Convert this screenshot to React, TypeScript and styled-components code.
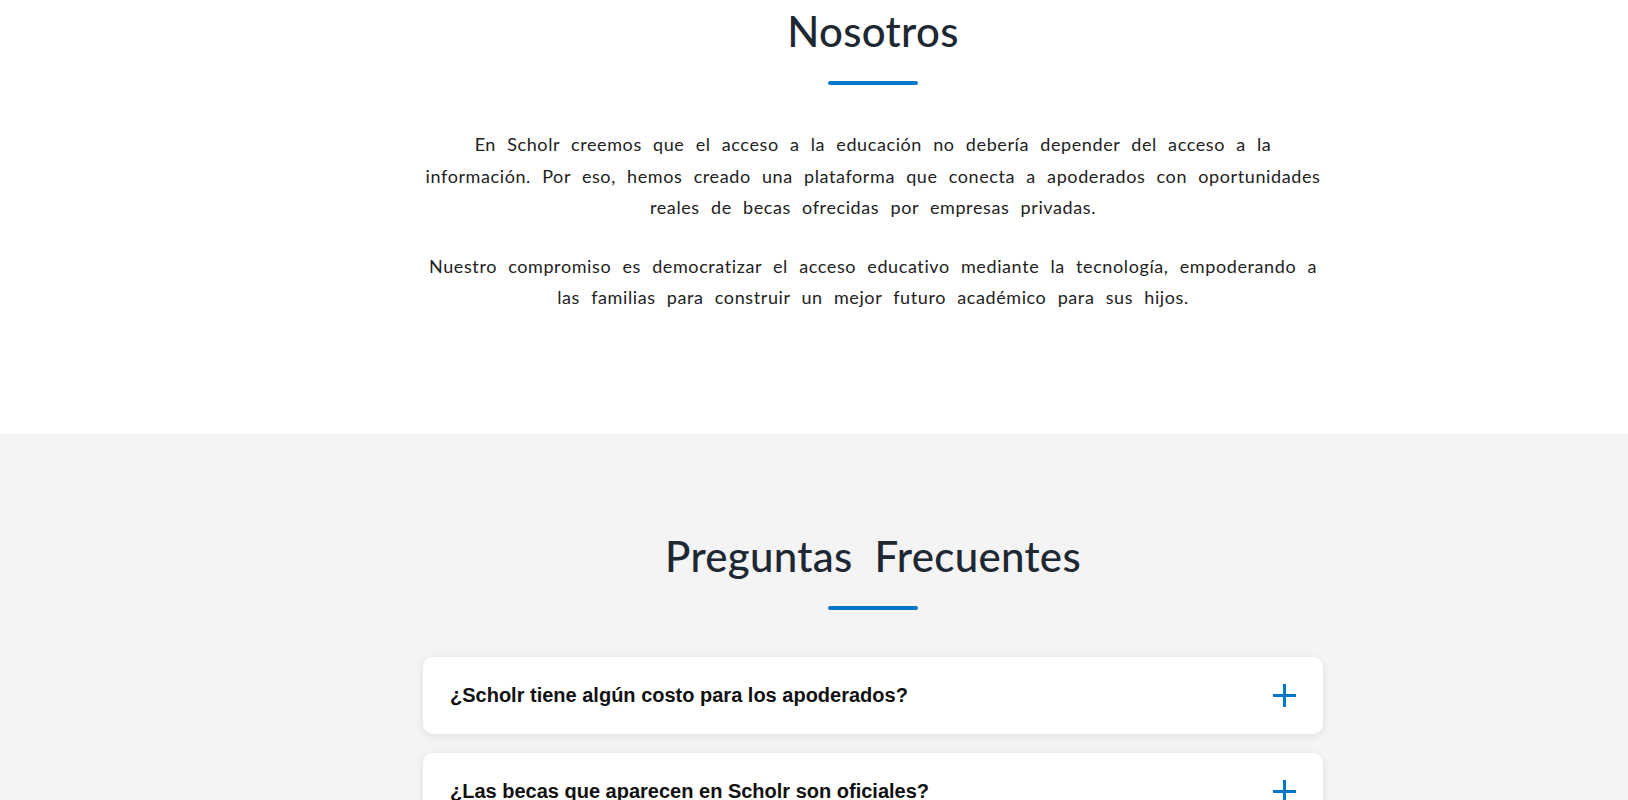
import React from "react";
import styled, { createGlobalStyle } from "styled-components";

const GlobalStyle = createGlobalStyle`
  html, body { margin: 0; padding: 0; background: #fff; }
  body { font-family: "Lato", "Noto Sans", sans-serif; color: #222; }
  * { box-sizing: border-box; }
`;

const Section = styled.section<{ $tone: "white" | "gray" }>`
  background: ${(p) => (p.$tone === "gray" ? "#f4f4f4" : "#ffffff")};
  padding: ${(p) => (p.$tone === "gray" ? "97px 0 80px 118px" : "6px 0 120px 118px")};
`;

const Container = styled.div`
  width: 900px;
  margin: 0 auto;
  display: flex;
  flex-direction: column;
  align-items: stretch;
`;

const Title = styled.h2`
  margin: 0;
  font-family: "Lato", "Noto Sans", sans-serif;
  font-size: 42px;
  font-weight: 500;
  line-height: 1.2;
  text-align: center;
  color: #1e2833;
  letter-spacing: 0.3px;
  word-spacing: 11px;
`;

const Bar = styled.div`
  width: 90px;
  height: 4px;
  border-radius: 2px;
  background: #0077c8;
  margin: 25px auto 44px;
`;

const Paragraph = styled.p`
  margin: 0 0 27px;
  font-size: 18px;
  line-height: 31.5px;
  text-align: center;
  color: #222;
  letter-spacing: 0.6px;
  word-spacing: 6px;
  &:last-child { margin-bottom: 0; }
`;

const FaqList = styled.div`
  display: flex;
  flex-direction: column;
  gap: 19px;
  margin-top: 3px;
`;

const FaqCard = styled.div`
  background: #fff;
  border-radius: 10px;
  box-shadow: 0 2px 8px rgba(0, 0, 0, 0.09);
  padding: 27px;
  display: flex;
  align-items: center;
  justify-content: space-between;
`;

const Question = styled.span`
  font-family: "Liberation Sans", Arial, sans-serif;
  font-weight: 700;
  font-size: 20px;
  line-height: 23px;
  color: #111;
`;

const PlusIcon = () => (
  <svg width="23" height="23" viewBox="0 0 23 23" aria-hidden="true">
    <line x1="11.5" y1="0" x2="11.5" y2="23" stroke="#0077c8" strokeWidth="3" />
    <line x1="0" y1="11.5" x2="23" y2="11.5" stroke="#0077c8" strokeWidth="3" />
  </svg>
);

const faqs = [
  "¿Scholr tiene algún costo para los apoderados?",
  "¿Las becas que aparecen en Scholr son oficiales?",
  "¿Cómo postulo a una beca?",
];

export default function App() {
  return (
    <>
      <GlobalStyle />
      <Section $tone="white">
        <Container>
          <Title>Nosotros</Title>
          <Bar />
          <Paragraph>
            En Scholr creemos que el acceso a la educación no debería depender del acceso a la
            <br />
            información. Por eso, hemos creado una plataforma que conecta a apoderados con oportunidades
            <br />
            reales de becas ofrecidas por empresas privadas.
          </Paragraph>
          <Paragraph>
            Nuestro compromiso es democratizar el acceso educativo mediante la tecnología, empoderando a
            <br />
            las familias para construir un mejor futuro académico para sus hijos.
          </Paragraph>
        </Container>
      </Section>
      <Section $tone="gray">
        <Container>
          <Title>Preguntas Frecuentes</Title>
          <Bar />
          <FaqList>
            {faqs.map((q) => (
              <FaqCard key={q}>
                <Question>{q}</Question>
                <PlusIcon />
              </FaqCard>
            ))}
          </FaqList>
        </Container>
      </Section>
    </>
  );
}
